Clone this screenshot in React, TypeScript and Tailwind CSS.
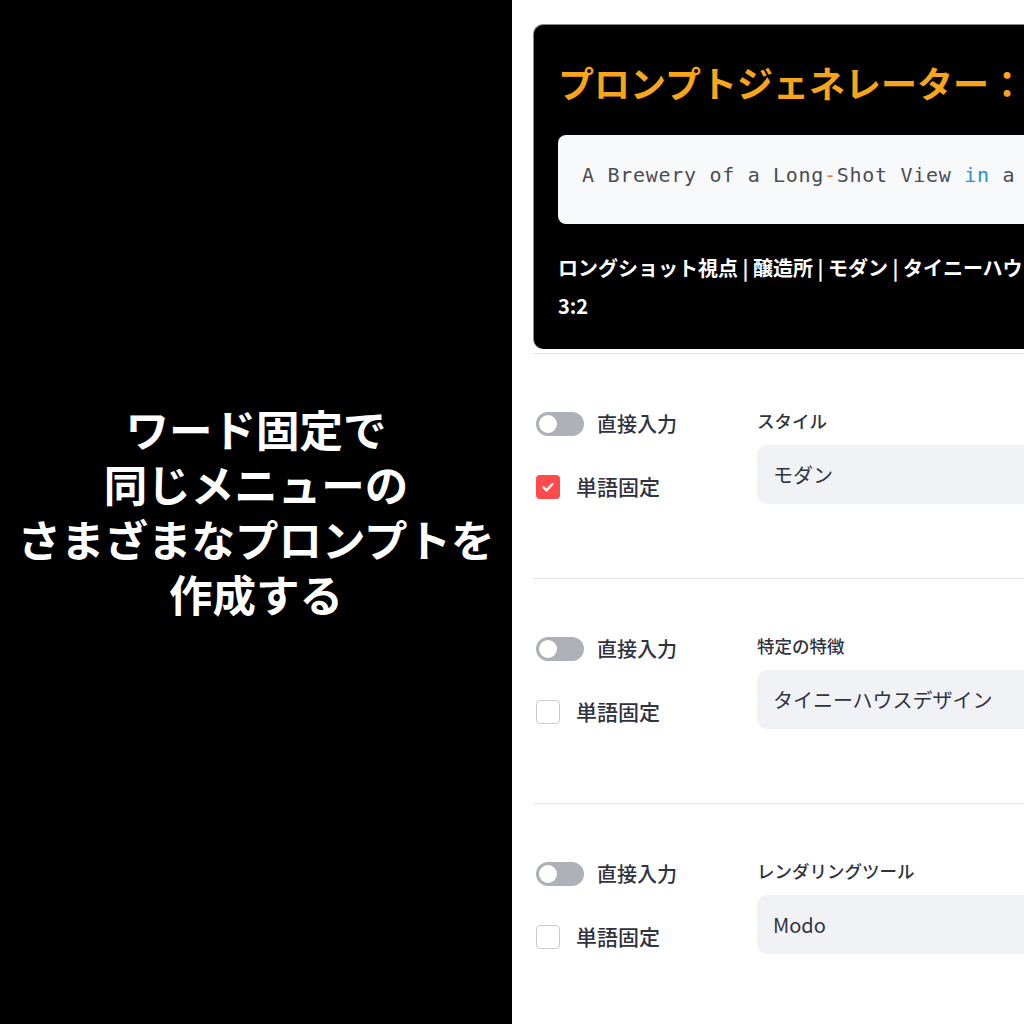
const jp = "font-['Noto_Sans_CJK_JP',sans-serif]";

function Toggle() {
  return (
    <div className="w-12 h-6 rounded-full bg-[#aeb1b8] p-[3px] flex items-center">
      <div className="w-[18px] h-[18px] rounded-full bg-white" />
    </div>
  );
}

function Checkbox({ checked }: { checked: boolean }) {
  if (checked) {
    return (
      <div className="w-6 h-6 rounded-[4px] bg-[#ff4b4b] flex items-center justify-center">
        <svg width="16" height="16" viewBox="0 0 16 16" fill="none">
          <path d="M3.5 8.3l3 3 6-6.3" stroke="white" strokeWidth="2.4" strokeLinecap="round" strokeLinejoin="round" />
        </svg>
      </div>
    );
  }
  return <div className="w-6 h-6 rounded-[4px] border border-[#c9cbd0] bg-white" />;
}

function Section({ label, value, locked }: { label: string; value: string; locked: boolean }) {
  return (
    <div className="border-t border-[#e4e5e8]">
      <div className="h-[224px] flex pl-[3px]">
        <div className="w-[221px] pt-[58px]">
          <div className="flex items-center gap-[13px] h-6">
            <Toggle />
            <span className="text-[20px] font-medium text-[#31333f]">直接入力</span>
          </div>
          <div className="flex items-center gap-4 h-6 mt-[39px]">
            <Checkbox checked={locked} />
            <span className="text-[21px] font-medium text-[#31333f]">単語固定</span>
          </div>
        </div>
        <div className="flex-1 pt-[55px]">
          <div className="text-[17.5px] leading-6 font-medium text-[#31333f]">{label}</div>
          <div className="mt-3 h-[59px] rounded-[10px] bg-[#f0f2f6] flex items-center pl-4 text-[20px] text-[#31333f]">
            {value}
          </div>
        </div>
      </div>
    </div>
  );
}

export default function App() {
  return (
    <div className={`w-[1024px] h-[1024px] flex overflow-hidden ${jp}`}>
      <div className="w-[512px] h-full bg-black flex items-center justify-center">
        <div className="text-white text-[43.5px] font-bold leading-[55px] text-center -mt-[2px]">
          <div>ワード固定で</div>
          <div>同じメニューの</div>
          <div>さまざまなプロンプトを</div>
          <div>作成する</div>
        </div>
      </div>
      <div className="w-[512px] h-full bg-white overflow-hidden pl-[21px] pt-6">
        <div className="w-[800px]">
          <div className="bg-black rounded-[10px] border-t border-l border-[#8a8a8a] px-6 pt-[35px] pb-6 whitespace-nowrap">
            <div className="text-[36px] leading-[44px] font-bold text-[#f8a51a]">
              プロンプトジェネレーター：醸造所
            </div>
            <div className="mt-[31px] h-[89px] rounded-[8px] bg-[#f8f9fb] flex items-center pl-6 pb-[9px] font-['DejaVu_Sans_Mono',monospace] text-[20px] tracking-[0.7px] text-[#4b4d55]">
              A Brewery of a Long<span className="text-[#f07a3a]">-</span>Shot View <span className="text-[#2b8ee0]">&nbsp;in</span>&nbsp;a Modern Style
            </div>
            <div className="mt-[25px] text-white font-bold text-[20px] leading-[38px]">
              <div>ロングショット視点 | 醸造所 | モダン | タイニーハウスデザイン | Modo</div>
              <div>3:2</div>
            </div>
          </div>
          <div className="mt-1">
            <Section label="スタイル" value="モダン" locked={true} />
            <Section label="特定の特徴" value="タイニーハウスデザイン" locked={false} />
            <Section label="レンダリングツール" value="Modo" locked={false} />
          </div>
        </div>
      </div>
    </div>
  );
}
